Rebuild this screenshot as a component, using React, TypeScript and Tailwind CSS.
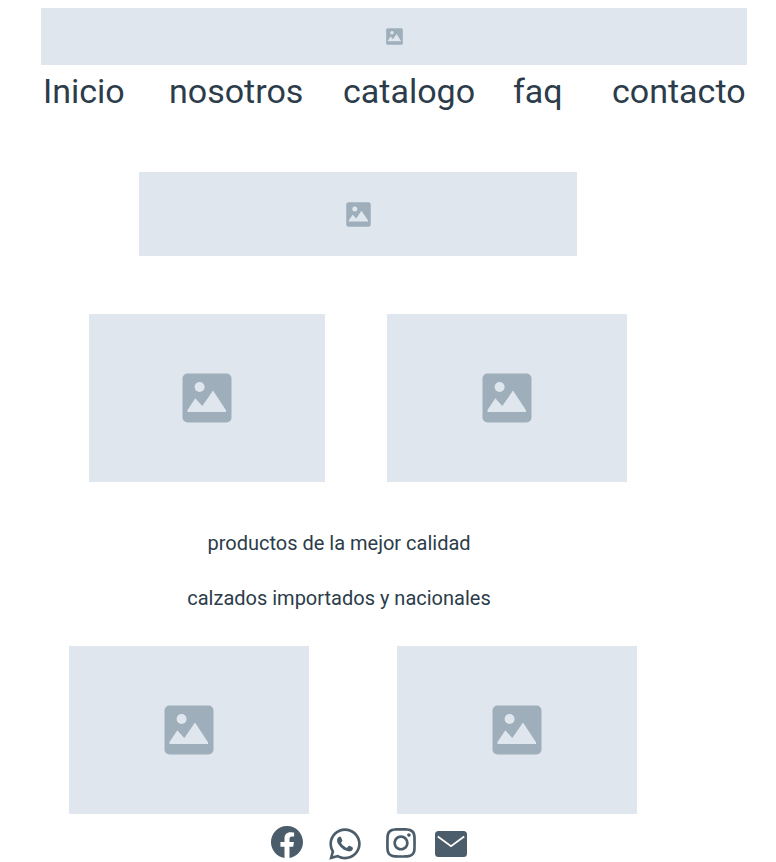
import { BsFacebook } from "react-icons/bs";
import { FaInstagram, FaWhatsapp } from "react-icons/fa";

function ImageIcon({ className }: { className: string }) {
  return (
    <svg viewBox="0 0 50 50" className={className} aria-hidden="true">
      <rect x="0.5" y="0.5" width="49" height="49" rx="5" fill="#9eaeba" />
      <circle cx="17.6" cy="14" r="5" fill="#dfe6ee" />
      <path d="M5.5 39v-2L13.3 25.3 20.3 33 31 17.6 44 37.2V39Z" fill="#dfe6ee" />
    </svg>
  );
}

function Placeholder({ className, icon }: { className: string; icon: string }) {
  return (
    <div className={`flex items-center justify-center bg-[#dfe6ee] ${className}`}>
      <ImageIcon className={icon} />
    </div>
  );
}

function MailIcon() {
  return (
    <svg viewBox="0 0 32 26" className="w-8" aria-hidden="true">
      <rect width="32" height="26" rx="3.5" fill="currentColor" />
      <path d="M2.8 5.5 16 15.2 29.2 5.5" fill="none" stroke="white" strokeWidth="1.8" />
    </svg>
  );
}

export default function App() {
  return (
    <div className="bg-white pt-2 font-['Roboto',sans-serif] text-[#2c3c4a]">
      <header className="pr-[29px] pl-[41px]">
        <Placeholder className="h-[57px]" icon="size-[17px]" />
        <nav className="grid grid-cols-[126fr_174fr_170fr_99fr_135fr] pt-1 pl-0.5 text-[34px] leading-[44px]">
          <a href="#inicio">Inicio</a>
          <a href="#nosotros">nosotros</a>
          <a href="#catalogo">catalogo</a>
          <a href="#faq">faq</a>
          <a href="#contacto">contacto</a>
        </nav>
      </header>
      <main>
        <section className="mt-[59px] pr-[199px] pl-[139px]">
          <Placeholder className="h-[84px]" icon="size-[25px]" />
        </section>
        <section className="mt-[58px] grid grid-cols-[236fr_240fr] gap-x-[62px] pr-[149px] pl-[89px]">
          <Placeholder className="h-[168px]" icon="size-[50px]" />
          <Placeholder className="h-[168px]" icon="size-[50px]" />
        </section>
        <section className="mt-[46px] space-y-[25px] pr-[98px] text-center text-xl leading-[30px]">
          <p>productos de la mejor calidad</p>
          <p>calzados importados y nacionales</p>
        </section>
        <section className="mt-[33px] grid grid-cols-2 gap-x-[88px] pr-[139px] pl-[69px]">
          <Placeholder className="h-[168px]" icon="size-[50px]" />
          <Placeholder className="h-[168px]" icon="size-[50px]" />
        </section>
      </main>
      <footer className="flex h-12 justify-center pt-3 pr-[38px] text-[#4b5c6b]">
        <a href="#facebook" aria-label="Facebook"><BsFacebook className="size-8" /></a>
        <a href="#whatsapp" aria-label="WhatsApp" className="ml-6"><FaWhatsapp className="size-9" /></a>
        <a href="#instagram" aria-label="Instagram" className="ml-[21px]"><FaInstagram className="size-[34px]" /></a>
        <a href="#correo" aria-label="Correo" className="ml-[17px] pt-[5px]"><MailIcon /></a>
      </footer>
    </div>
  );
}
